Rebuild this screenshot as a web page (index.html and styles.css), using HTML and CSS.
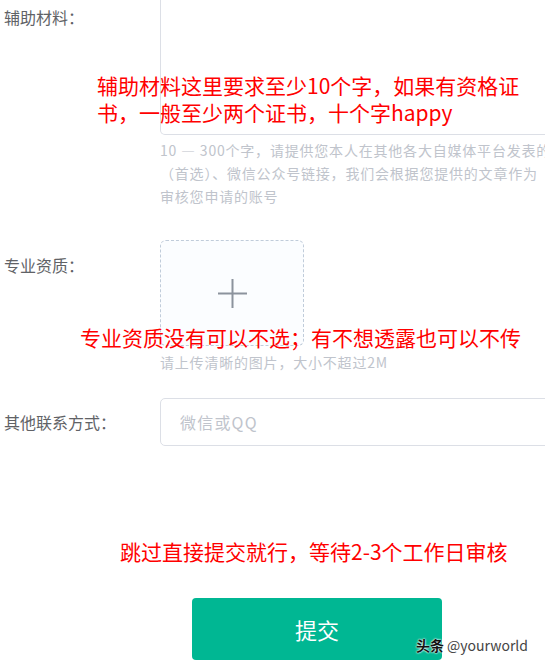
FILE: index.html
```html
<!DOCTYPE html>
<html lang="zh-CN">
<head>
    <meta charset="UTF-8">
    <meta name="viewport" content="width=device-width, initial-scale=1.0">
    <title>申请认证</title>
    <link rel="stylesheet" href="styles.css">
</head>
<body>
    <form class="apply-form">
        <!-- 辅助材料 -->
        <div class="form-row row-material">
            <label class="form-label">辅助材料：</label>
            <div class="form-field">
                <textarea class="form-textarea"></textarea>
                <p class="form-help">10 — 300个字，请提供您本人在其他各大自媒体平台发表的文章链接<br>（首选）、微信公众号链接，我们会根据您提供的文章作为<br>审核您申请的账号</p>
            </div>
            <p class="note note-material">辅助材料这里要求至少10个字，如果有资格证<br>书，一般至少两个证书，十个字happy</p>
        </div>

        <!-- 专业资质 -->
        <div class="form-row row-cert">
            <label class="form-label">专业资质：</label>
            <div class="form-field">
                <div class="upload-box">
                    <svg class="upload-plus" viewBox="0 0 29 29">
                        <path d="M14.5 0 V29 M0 14.5 H29" stroke="#8c939d" stroke-width="2" fill="none"/>
                    </svg>
                </div>
                <p class="upload-tip">请上传清晰的图片，大小不超过2M</p>
            </div>
            <p class="note note-cert">专业资质没有可以不选；有不想透露也可以不传</p>
        </div>

        <!-- 其他联系方式 -->
        <div class="form-row row-contact">
            <label class="form-label">其他联系方式：</label>
            <div class="form-field">
                <input type="text" class="form-input" placeholder="微信或QQ">
            </div>
        </div>

        <p class="note note-submit">跳过直接提交就行，等待2-3个工作日审核</p>

        <div class="form-actions">
            <button type="button" class="submit-button">提交</button>
        </div>
    </form>

    <div class="watermark"><b>头条</b> @yourworld</div>
</body>
</html>
```

FILE: styles.css
```css
/* 基础 */
html, body {
    margin: 0;
    padding: 0;
}

body {
    width: 545px;
    height: 665px;
    overflow: hidden;
    position: relative;
    background: #fff;
    font-family: "Noto Sans CJK SC", "Microsoft YaHei", sans-serif;
    color: #606266;
}

.apply-form {
    display: flex;
    flex-direction: column;
}

.form-row {
    position: relative;
    display: flex;
}

.form-label {
    width: 156px;
    padding-left: 4px;
    flex-shrink: 0;
    font-size: 16px;
    line-height: 22px;
    color: #606266;
}

.form-field {
    flex: 1;
    min-width: 0;
}

/* 辅助材料 */
.row-material .form-label {
    padding-top: 6px;
}

.form-textarea {
    display: block;
    box-sizing: border-box;
    width: 420px;
    height: 135px;
    border: 1px solid #dcdfe6;
    border-top: none;
    border-radius: 0 0 5px 5px;
    resize: none;
    background: #fff;
}

.form-help {
    margin: 4px 0 0;
    font-size: 14px;
    line-height: 23px;
    letter-spacing: 0.8px;
    color: #c0c4cc;
    white-space: nowrap;
}

/* 专业资质 */
.row-cert {
    margin-top: 32px;
}

.row-cert .form-label {
    padding-top: 14px;
}

.upload-box {
    box-sizing: border-box;
    width: 144px;
    height: 106px;
    border: 1px dashed #c0ccda;
    border-radius: 6px;
    background: #fbfdff;
    display: flex;
    justify-content: center;
    align-items: center;
}

.upload-plus {
    width: 29px;
    height: 29px;
}

.upload-tip {
    margin: 6px 0 0;
    font-size: 14px;
    line-height: 20px;
    letter-spacing: 0.8px;
    color: #c0c4cc;
}

/* 其他联系方式 */
.row-contact {
    margin-top: 26px;
    align-items: center;
}

.form-input {
    display: block;
    box-sizing: border-box;
    width: 420px;
    height: 48px;
    padding: 0 19px;
    border: 1px solid #dcdfe6;
    border-radius: 5px;
    font-family: inherit;
    font-size: 16px;
    letter-spacing: 1.2px;
    color: #606266;
}

.form-input::placeholder {
    color: #c0c4cc;
}

/* 红色标注 */
.note {
    margin: 0;
    font-size: 21px;
    line-height: 27px;
    color: #ff0000;
    white-space: nowrap;
}

.note-material {
    position: absolute;
    left: 97px;
    top: 72px;
}

.note-cert {
    position: absolute;
    left: 80px;
    top: 83px;
    line-height: 28px;
}

.note-submit {
    margin-top: 91px;
    padding-left: 120px;
    line-height: 28px;
}

/* 提交 */
.form-actions {
    margin-top: 33px;
    padding-left: 192px;
}

.submit-button {
    width: 250px;
    height: 62px;
    border: none;
    border-radius: 4px;
    background: #00b793;
    color: #fff;
    font-family: inherit;
    font-size: 22px;
}

.watermark {
    position: absolute;
    right: 17px;
    bottom: 10px;
    font-size: 14px;
    line-height: 20px;
    color: #444;
    text-shadow: 0 0 2px #fff, 0 0 2px #fff;
}

.watermark b {
    color: #111;
}
```
